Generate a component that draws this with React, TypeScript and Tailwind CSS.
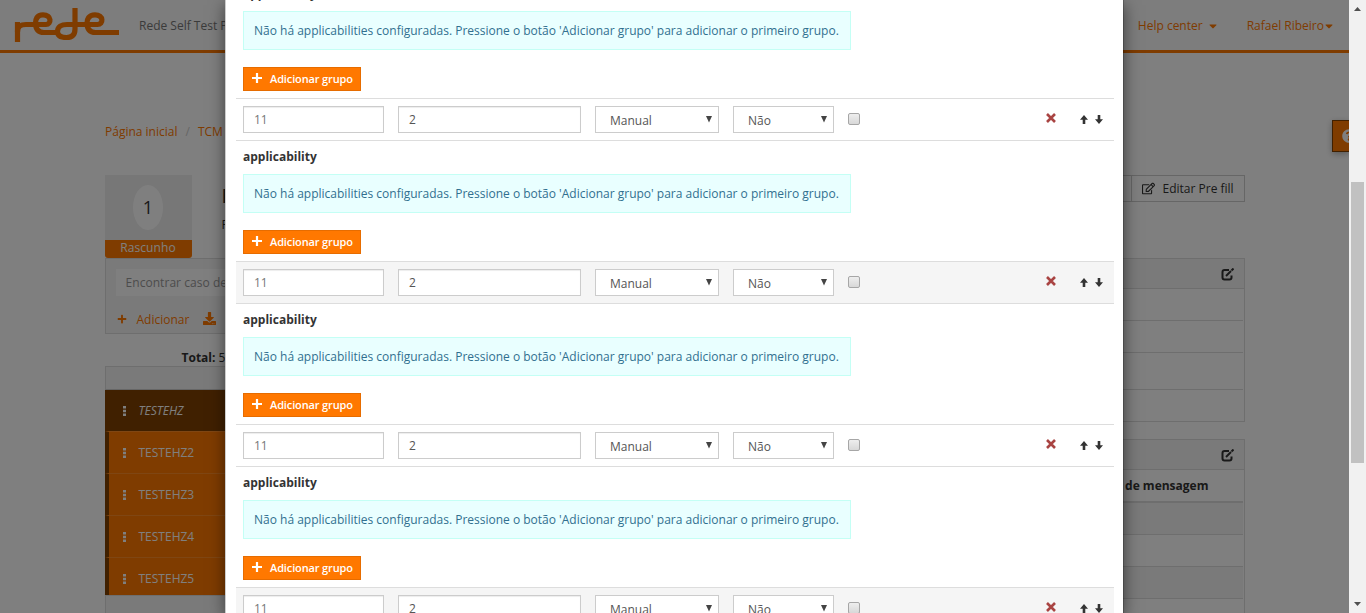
import React from "react";
import { FaPlus, FaDownload, FaRegEdit, FaCaretDown, FaQuestionCircle } from "react-icons/fa";

const Logo = () => (
  <svg width="106" height="36" viewBox="0 0 106 36" className="ml-[14px] mt-[7px]" fill="none" stroke="#ff7800" strokeWidth="5.2">
    <path d="M3.500 35V15" />
    <path d="M3.500 25C3.500 19 7 17.500 12 17.500H32C37.500 17.500 38 7.800 29 7.800C22.500 7.800 21.500 12.500 21.500 16C21.500 22 24 25.500 30 25.500H45" />
    <path d="M61 1V22C61 28 58 30.500 52.500 30.500C47 30.500 43.500 28.500 43.500 24.500C43.500 19.500 47.500 17.500 53 17.500H83.500C89.500 17.500 90 7.800 81 7.800C74.500 7.800 73 12.500 73 16C73 22 75.500 25.500 81.500 25.500H105" />
  </svg>
);

const EditBox = () => (
  <svg width="13" height="13" viewBox="0 0 13 13" fill="none" stroke="#333" strokeWidth="2">
    <path d="M8 2H3.500Q1.500 2 1.500 4V9.500Q1.500 11.500 3.500 11.500H8.500Q10.500 11.500 10.500 9.500V7.500" />
    <path d="M5 8L10 3" />
    <path d="M10.500 2.500L12.500 .5" />
  </svg>
);

const Remove = () => (
  <svg width="10" height="10" viewBox="0 0 10 10" stroke="#a94442" strokeWidth="2.600">
    <path d="M1 1L9 9M9 1L1 9" />
  </svg>
);

const BoldPlus = () => (
  <svg width="10" height="10" viewBox="0 0 10 10" stroke="#fff" strokeWidth="2.200" className="-mt-[2px] mr-[8px]">
    <path d="M5 0V10M0 5H10" />
  </svg>
);

const Arrow = ({ down = false }: { down?: boolean }) => (
  <svg width="8" height="9" viewBox="0 0 8 9" fill="#333" className={down ? "rotate-180" : ""}>
    <path d="M4 0L8 4.800H5.300V9H2.700V4.800H0Z" />
  </svg>
);

const Select = ({ label, width }: { label: string; width: string }) => (
  <div className={`${width} flex h-[27px] justify-between border border-[#ccc] bg-white pl-[14px] pr-[5px] text-[12px] leading-[28px] text-[#555]`}>
    <span>{label}</span>
    <svg width="8" height="7" viewBox="0 0 8 7" className="mt-[9px]" fill="#444">
      <path d="M1 0H7L4 6.500Z" />
    </svg>
  </div>
);

const Block = ({ striped }: { striped: boolean }) => (
  <section className="h-[163px] shrink-0">
    <div className={`flex h-[43px] border-y border-[#ddd] pl-[7px] pt-[7px] ${striped ? "bg-[#f5f5f5]" : "bg-white"}`}>
      <div className="h-[27px] w-[141px] border border-[#ccc] bg-white pl-[10px] text-[12px] leading-[26px] text-[#777] shadow-[inset_0_1px_1px_rgba(0,0,0,0.075)]">11</div>
      <div className="ml-[14px] h-[27px] w-[183px] border border-[#ccc] bg-white pl-[10px] text-[12px] leading-[26px] text-[#555] shadow-[inset_0_1px_1px_rgba(0,0,0,0.075)]">2</div>
      <div className="ml-[14px] flex gap-[14px]">
        <Select label="Manual" width="w-[124px]" />
        <Select label="Não" width="w-[101px]" />
      </div>
      <div className="ml-[14px] mt-[7px] h-[12px] w-[12px] rounded-[2px] border border-[#a6a6a6] bg-linear-to-b from-[#eee] to-[#d8d8d8]" />
      <div className="ml-auto mr-[58px] mt-[7px]"><Remove /></div>
      <div className="-ml-[34px] mr-[11px] mt-[9px] flex gap-[7px]"><Arrow /><Arrow down /></div>
    </div>
    <div className="pl-[7px]">
      <h4 className="h-[33px] pt-[7px] text-[12px] font-bold leading-[18px] text-[#333]">applicability</h4>
      <div className="h-[39px] w-[608px] whitespace-nowrap border border-[#c4fff5] bg-[#e9ffff] pl-[10px] text-[12px] leading-[37px] text-[#31708f]">
        Não há applicabilities configuradas. Pressione o botão 'Adicionar grupo' para adicionar o primeiro grupo.
      </div>
      <button className="mt-[17px] flex h-[24px] w-[118px] items-center whitespace-nowrap border border-[#e66c00] bg-[#ff7800] pl-[8px] text-[11px] font-semibold tracking-[-0.13px] text-white">
        <BoldPlus />Adicionar grupo
      </button>
    </div>
  </section>
);

const Dots = () => (
  <svg width="3" height="10" viewBox="0 0 3 10" fill="#fff"><path d="M0 0H3V2.500H0ZM0 3.700H3V6.300H0ZM0 7.500H3V10H0Z" /></svg>
);

const Sidebar = () => (
  <aside className="w-[300px]">
    <div className="flex">
      <div className="w-[87px]">
        <div className="flex h-[65px] items-center justify-center bg-[#eee]">
          <span className="flex h-[45px] w-[30px] items-center justify-center rounded-[50%] bg-white text-[18px] text-[#333]">1</span>
        </div>
        <div className="h-[18px] rounded-b-[3px] bg-[#ff7800] text-center text-[12px] leading-[16px] tracking-[0.1px] text-white">Rascunho</div>
      </div>
      <div className="ml-[29px] whitespace-nowrap text-[#333]">
        <div className="pl-px pt-[8px] text-[20px] font-semibold leading-[26px]">R</div>
        <div className="pl-px pt-[7px] text-[12px] leading-[18px]">F</div>
      </div>
    </div>
    <div className="h-[76px] border border-[#ddd] bg-[#f5f5f5] pl-[10px] pt-[10px]">
      <div className="h-[27px] w-[200px] whitespace-nowrap bg-white pl-[10px] text-[12px] leading-[28px] tracking-[0.05px] text-[#999]">Encontrar caso de</div>
      <div className="mt-[15px] flex items-center pl-px text-[12px] leading-[18px] text-[#ff7800]">
        <FaPlus size={10} className="-mt-[2px]" /><span className="ml-[10px]">Adicionar</span>
        <FaDownload size={13} className="-mt-[3px] ml-[14px]" /><span className="ml-[8px]">I</span>
      </div>
    </div>
    <div className="h-[32px] pl-[77px] pt-[15px] text-[12px] leading-[18px] text-[#333]"><b>Total:</b> 5</div>
    <div className="h-[24px] border border-b-[#ccc] border-[#ddd] bg-[#f5f5f5]" />
    <div className="flex h-[41px] items-center bg-[#804000] pl-[18px] text-[12px] italic text-white"><Dots /><span className="ml-[13px]">TESTEHZ</span></div>
    {["TESTEHZ2", "TESTEHZ3", "TESTEHZ4", "TESTEHZ5"].map((name) => (
      <div key={name} className="flex h-[42px] items-center border-l-4 border-t border-l-[#804000] border-t-[#ff8c26] bg-[#ff7800] pl-[14px] text-[12px] text-white">
        <Dots /><span className="ml-[13px]">{name}</span>
      </div>
    ))}
    <div className="-mt-[4px] h-[40px] border border-[#ddd] bg-[#f5f5f5]" />
  </aside>
);

const PanelHead = () => (
  <div className="flex h-[30px] justify-end border-b border-[#ddd] bg-[#f5f5f5] pr-[10px] pt-[9px]"><EditBox /></div>
);

const Details = () => (
  <div className="flex w-[300px] flex-col">
    <div className="flex h-[27px] justify-end">
      <div className="w-[80px] border border-r-0 border-[#ccc]" />
      <div className="flex w-[114px] items-center border border-[#ccc] pl-[10px] text-[12px] text-[#333]">
        <FaRegEdit size={13} className="mr-[8px]" />Editar Pre fill
      </div>
    </div>
    <div className="mt-[56px] h-[164px] border border-[#ddd]">
      <PanelHead />
      <div className="mr-px">
        <div className="h-[32px] border-b border-[#ddd]" />
        <div className="h-[32px] border-b border-[#ddd]" />
        <div className="h-[37px] border-b border-[#ddd]" />
      </div>
    </div>
    <div className="mt-[17px] h-[200px] border border-[#ddd]">
      <PanelHead />
      <div className="mr-px">
        <div className="h-[33px] border-b-2 border-[#ddd] pr-[34px] text-right text-[12px] font-bold leading-[32px] text-[#333]">de mensagem</div>
        <div className="h-[32px] border-b border-[#ddd] bg-[#f5f5f5]" />
        <div className="h-[32px] border-b border-[#ddd]" />
        <div className="h-[32px] border-b border-[#ddd] bg-[#f5f5f5]" />
      </div>
    </div>
  </div>
);

export default function App() {
  return (
    <div className="relative flex h-[613px] w-[1366px] overflow-hidden bg-white font-['Open_Sans',sans-serif]">
      <main className="h-[613px] w-[1349px] overflow-hidden">
        <header className="flex h-[53px] border-b-[3px] border-[#ff7800] bg-[#fafafa] text-[12px] text-[#ff7800]">
          <Logo />
          <span className="ml-[19px] leading-[52px] text-[#777]">Rede Self Test P</span>
          <div className="ml-auto flex pr-[14px] pt-[2px]">
            <span className="flex items-center">Help center<FaCaretDown size={12} className="ml-[4px]" /></span>
            <span className="ml-[28px] flex items-center">Rafael Ribeiro<FaCaretDown size={12} className="-ml-px" /></span>
          </div>
        </header>
        <div className="flex justify-end">
          <nav className="mr-auto flex h-[122px] gap-[8px] pl-[105px] pt-[70px] text-[12px] leading-[18px] text-[#ff7800]">
            <span>Página inicial</span><span className="text-[#ccc]">/</span><span>TCM</span>
          </nav>
          <div className="mt-[67px] flex h-[32px] w-[17px] items-center overflow-hidden border border-r-0 border-[#804000] bg-[#ff7800] pl-[9px] text-white shadow-[0_2px_6px_rgba(0,0,0,0.3)]">
            <FaQuestionCircle size={14} className="shrink-0" />
          </div>
        </div>
        <div className="mx-auto flex w-[1140px] justify-between">
          <Sidebar />
          <Details />
        </div>
      </main>
      <div className="flex w-[17px] flex-col items-center justify-between bg-[#f1f1f1]">
        <svg width="7" height="4" viewBox="0 0 7 4" className="mt-[7px]" fill="#505050"><path d="M0 4L3.500 0L7 4Z" /></svg>
        <div className="mb-[139px] mt-auto h-[281px] w-[13px] bg-[#c1c1c1]" />
        <svg width="7" height="4" viewBox="0 0 7 4" className="mb-[7px]" fill="#505050"><path d="M0 0L3.500 4L7 0Z" /></svg>
      </div>
      <div className="absolute left-0 top-0 h-[613px] w-[1349px] overflow-hidden bg-black/50">
        <div className="ml-[225px] flex h-[613px] w-[899px] flex-col justify-end border-x border-l-[#ccc] border-r-black/20 bg-white bg-clip-padding pl-[10px] pr-[9px] shadow-[0_5px_15px_rgba(0,0,0,0.5)]">
          <div className="-mb-[137px] flex flex-col">
            {[true, false, true, false, true].map((striped, i) => (
              <Block key={i} striped={striped} />
            ))}
          </div>
        </div>
      </div>
    </div>
  );
}
